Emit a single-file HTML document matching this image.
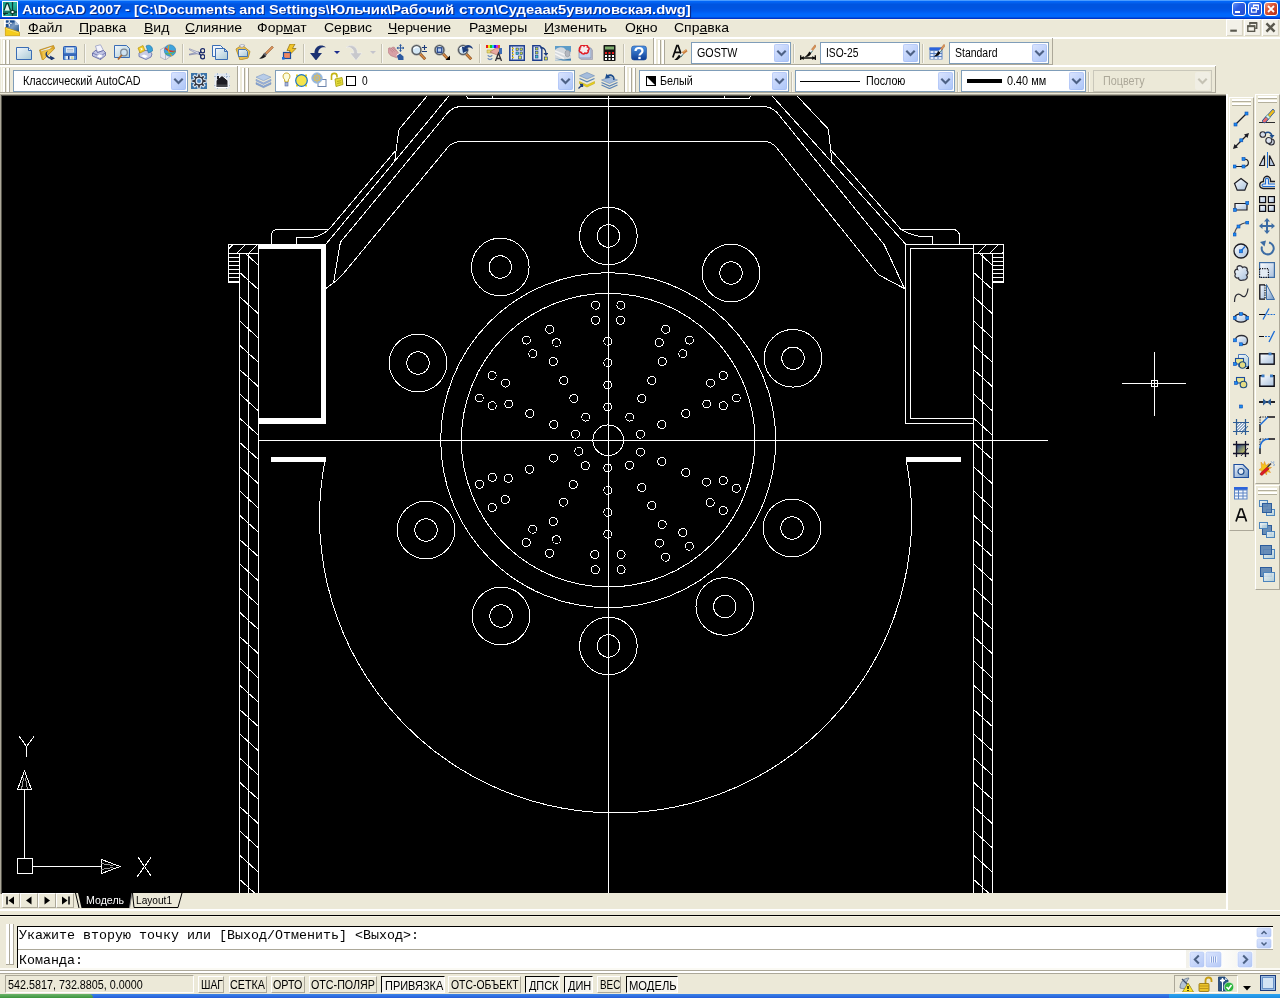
<!DOCTYPE html>
<html><head><meta charset="utf-8"><title>AutoCAD 2007</title>
<style>
*{box-sizing:border-box;margin:0;padding:0}
html,body{width:1280px;height:998px;overflow:hidden;background:#ece9d8;}
body{will-change:transform;font-family:"Liberation Sans",sans-serif;}
.abs{position:absolute}
#title{position:absolute;left:0;top:0;width:1280px;height:19px;background:linear-gradient(#4a9cff 0,#4a9cff 1px,#0268fa 1px,#0360ee 3px,#0055e0 4px,#0055e0 8px,#0058ec 11px,#0066fc 14px,#0066fc 16.5px,#0050e0 17.5px,#0034cc 18px,#0034cc 19px)}
#title .txt{position:absolute;left:22px;top:1.6px;color:#fff;font-weight:bold;font-size:13px;line-height:16px;white-space:pre;transform-origin:0 0;text-shadow:1px 1px 0 #0a2a8a}
#menubar{position:absolute;left:0;top:19px;width:1280px;height:19px;background:#ece9d8}
.mi{position:absolute;top:-0.4px;font-size:13px;line-height:17px;transform:scaleX(1.077);color:#000;white-space:nowrap;transform-origin:0 0}
.mi u{text-decoration:underline;text-underline-offset:1px}
#draw{position:absolute;left:2px;top:96px;width:1224px;height:797px;background:#000;overflow:hidden}
#draw svg{position:absolute;left:-2px;top:-96px}
svg.d line,svg.d circle,svg.d path{stroke:#fff;fill:none;stroke-width:1}
.combo{position:absolute;height:21px;background:#fff;border:1px solid #7f9db9;font-size:12.5px;line-height:20px;color:#000;white-space:nowrap;overflow:hidden}
.combo .btn{position:absolute;right:1px;top:1px;width:15px;height:18px;border-radius:2px;background:linear-gradient(135deg,#dbe5fe 0,#c3d4fb 50%,#abc5f7 100%);box-shadow:inset 0 0 0 1px rgba(160,185,245,.45)}
.combo .btn svg{position:absolute;left:0;top:0}
.combo span.t{position:absolute;top:0;transform-origin:0 0}
.grip{position:absolute;width:5px;border-left:1px solid #fff;border-right:1px solid #aca899;background:linear-gradient(90deg,#ece9d8 0,#ece9d8 1px,#aca899 1px,#aca899 2px,#fff 2px,#fff 3px)}
.vsep{position:absolute;width:2px;border-left:1px solid #c5c2b2;border-right:1px solid #f8f7f2}
.hl{position:absolute;height:1px}
.sb{position:absolute;top:976px;height:17px;font-size:12px;line-height:17px;color:#000;white-space:nowrap;border:1px solid;border-color:#fff #aca899 #aca899 #fff;overflow:hidden}
.sb.on{border-color:#000 #fff #fff #000;background:#f6f5ef}
.sb.on span{margin:1px 0 0 0}
.sb span{position:absolute;top:0;transform-origin:0 0}

.cmd{font-family:"Liberation Mono",monospace;font-size:13.33px;line-height:16px;color:#000;white-space:nowrap}
.combo.dis{background:#ece9d8;border-color:#c9c7ba;color:#aca899}
.combo.dis .btn{background:#f0eee4;border-color:#dedbd0}
.combo.dis .btn{box-shadow:none}
.combo.dis .btn path{stroke:#c5c2b5}

</style></head>
<body>
<svg class="abs" width="0" height="0" style="left:0;top:0"><defs><linearGradient id="glb" x1="0" y1="0" x2="1" y2="1"><stop offset="0" stop-color="#fdfeff"/><stop offset="1" stop-color="#a8c0dc"/></linearGradient><linearGradient id="gmid" x1="0" y1="0" x2="1" y2="1"><stop offset="0" stop-color="#f4f8fc"/><stop offset="1" stop-color="#6c94c4"/></linearGradient><linearGradient id="gpage" x1="0" y1="0" x2="1" y2="1"><stop offset="0" stop-color="#f4f8fb"/><stop offset="1" stop-color="#a9c9d6"/></linearGradient></defs></svg>
<div id="title">
<span class="txt" style="left:22.3px;transform:scaleX(1.0976)">AutoCAD 2007 - </span>
<span class="txt" style="left:134.1px;transform:scaleX(1.0965)">[C:\Documents and </span>
<span class="txt" style="left:268.8px;transform:scaleX(1.1084)">Settings\</span>
<span class="txt" style="left:329.6px;transform:scaleX(1.1418)">Юльчик\</span>
<span class="txt" style="left:391.1px;transform:scaleX(1.1515)">Рабочий </span>
<span class="txt" style="left:458.5px;transform:scaleX(1.1908)">стол\</span>
<span class="txt" style="left:497.7px;transform:scaleX(1.1377)">Судеаак5увиловская.dwg]</span>
<svg class="abs" style="left:2px;top:1px" width="16" height="16" viewBox="0 0 16 16"><defs><linearGradient id="gapp" x1="0" y1="0" x2="1" y2="1"><stop offset="0" stop-color="#1c9c88"/><stop offset=".5" stop-color="#28b8a0"/><stop offset="1" stop-color="#107060"/></linearGradient></defs><rect x="0" y="0" width="16" height="16" fill="#fff"/><rect x="1" y="1" width="14" height="14" fill="url(#gapp)"/><path d="M2 9.500l2.500-7h1.500l2.500 7" fill="#e4f4f0" stroke="#0c3c30" stroke-width="1.300"/><path d="M1 11h7M1 12.500h5" stroke="#0c3c30" stroke-width="1"/><path d="M10.500 1v14M8 11h7" stroke="#0c3c30" stroke-width="1.300"/><rect x="9" y="9.500" width="3" height="3" fill="#fff" stroke="#0c3c30" stroke-width="1"/><path d="M2 14l2-2" stroke="#0c2c24" stroke-width="1.200"/></svg>
<svg class="abs" style="left:1232px;top:2px" width="14" height="14" viewBox="0 0 14 14"><defs><linearGradient id="gtb" x1="0" y1="0" x2="1" y2="1"><stop offset="0" stop-color="#6c9cfc"/><stop offset=".4" stop-color="#2c5ce4"/><stop offset="1" stop-color="#2448c8"/></linearGradient><linearGradient id="gtc" x1="0" y1="0" x2="1" y2="1"><stop offset="0" stop-color="#f0a08c"/><stop offset=".4" stop-color="#dc5434"/><stop offset="1" stop-color="#b42c14"/></linearGradient></defs><rect x=".5" y=".5" width="13" height="13" rx="2.500" fill="url(#gtb)" stroke="#fff" stroke-width="1"/><rect x="3" y="9" width="5" height="2" fill="#fff"/></svg>
<svg class="abs" style="left:1248px;top:2px" width="14" height="14" viewBox="0 0 14 14"><defs><linearGradient id="gtb" x1="0" y1="0" x2="1" y2="1"><stop offset="0" stop-color="#6c9cfc"/><stop offset=".4" stop-color="#2c5ce4"/><stop offset="1" stop-color="#2448c8"/></linearGradient><linearGradient id="gtc" x1="0" y1="0" x2="1" y2="1"><stop offset="0" stop-color="#f0a08c"/><stop offset=".4" stop-color="#dc5434"/><stop offset="1" stop-color="#b42c14"/></linearGradient></defs><rect x=".5" y=".5" width="13" height="13" rx="2.500" fill="url(#gtb)" stroke="#fff" stroke-width="1"/><path d="M5.500 5v-1.700h4.800v4h-1.500" fill="none" stroke="#fff" stroke-width="1.200"/><path d="M5 3.300h5.800" stroke="#fff" stroke-width="1.600"/><rect x="3.500" y="6.300" width="4.800" height="3.800" fill="none" stroke="#fff" stroke-width="1.200"/><path d="M3 6.200h5.800" stroke="#fff" stroke-width="1.600"/></svg>
<svg class="abs" style="left:1264px;top:2px" width="14" height="14" viewBox="0 0 14 14"><defs><linearGradient id="gtb" x1="0" y1="0" x2="1" y2="1"><stop offset="0" stop-color="#6c9cfc"/><stop offset=".4" stop-color="#2c5ce4"/><stop offset="1" stop-color="#2448c8"/></linearGradient><linearGradient id="gtc" x1="0" y1="0" x2="1" y2="1"><stop offset="0" stop-color="#f0a08c"/><stop offset=".4" stop-color="#dc5434"/><stop offset="1" stop-color="#b42c14"/></linearGradient></defs><rect x=".5" y=".5" width="13" height="13" rx="2.500" fill="url(#gtc)" stroke="#fff" stroke-width="1"/><path d="M4 4l6 6M10 4l-6 6" stroke="#fff" stroke-width="1.900"/></svg>
</div>
<div id="menubar">
<div class="abs" style="left:0;top:0;width:1280px;height:1px;background:#fbf2db"></div>
<svg class="abs" style="left:4px;top:1px" width="16" height="16" viewBox="0 0 16 16"><defs><linearGradient id="gdoc" x1="0" y1="0" x2="1" y2="1"><stop offset="0" stop-color="#1c4c8c"/><stop offset=".5" stop-color="#7c9cc4"/><stop offset="1" stop-color="#1c4c84"/></linearGradient></defs><rect x="0" y="0" width="16" height="16" fill="#fff"/><path d="M2 .500h9l4 4.500v8h-13z" fill="url(#gdoc)"/><path d="M11 .500l4 4.500h-4z" fill="#b4c8e0"/><rect x="1.800" y=".500" width="2.600" height="2" fill="#1c4c8c"/><rect x="5.800" y=".500" width="4.500" height="2" fill="#1c4c8c"/><rect x="1.800" y="4" width="2.600" height="3" fill="#1c4c8c"/><path d="M5.300 .500v6M1.800 3.300h6" stroke="#fff" stroke-width="1"/><circle cx="5.300" cy="3.300" r="1" fill="#1c4c8c" stroke="#fff" stroke-width=".7"/><path d="M1.200 7.400l14.600 4.800v3.600h-14.600z" fill="#f4cc1c" stroke="#c4940c" stroke-width=".8"/><path d="M2 8.500l12.500 4.200" stroke="#fce46c" stroke-width="1"/></svg>
<span class="mi" style="left:28px"><u>Ф</u>айл</span>
<span class="mi" style="left:79px"><u>П</u>равка</span>
<span class="mi" style="left:144px"><u>В</u>ид</span>
<span class="mi" style="left:185px"><u>С</u>лияние</span>
<span class="mi" style="left:257px">Фор<u>м</u>ат</span>
<span class="mi" style="left:324px">Се<u>р</u>вис</span>
<span class="mi" style="left:388px"><u>Ч</u>ерчение</span>
<span class="mi" style="left:469px">Ра<u>з</u>меры</span>
<span class="mi" style="left:544px"><u>И</u>зменить</span>
<span class="mi" style="left:625px">О<u>к</u>но</span>
<span class="mi" style="left:674px">Спр<u>а</u>вка</span>
<svg class="abs" style="left:1226px;top:0px" width="17" height="17" viewBox="0 0 16 16"><rect x="0" y="0" width="16" height="16" fill="#fff"/><rect x="1" y="1" width="14.500" height="14.500" fill="#f3f1e8"/><path d="M15.500 1v14.500h-14.500" fill="none" stroke="#d6d2c2" stroke-width="1"/><rect x="4" y="10" width="6.200" height="2" fill="#5a584e"/></svg>
<svg class="abs" style="left:1244px;top:0px" width="17" height="17" viewBox="0 0 16 16"><rect x="0" y="0" width="16" height="16" fill="#fff"/><rect x="1" y="1" width="14.500" height="14.500" fill="#f3f1e8"/><path d="M15.500 1v14.500h-14.500" fill="none" stroke="#d6d2c2" stroke-width="1"/><path d="M5.500 5.500v-1.800h6.500v5h-1.500" fill="none" stroke="#5a584e" stroke-width="1.300"/><path d="M5.200 3.700h7" stroke="#5a584e" stroke-width="1.800"/><rect x="3.600" y="6.600" width="6.400" height="5" fill="none" stroke="#5a584e" stroke-width="1.300"/><path d="M3 6.800h7.600" stroke="#5a584e" stroke-width="1.800"/></svg>
<svg class="abs" style="left:1262px;top:0px" width="17" height="17" viewBox="0 0 16 16"><rect x="0" y="0" width="16" height="16" fill="#fff"/><rect x="1" y="1" width="14.500" height="14.500" fill="#f3f1e8"/><path d="M15.500 1v14.500h-14.500" fill="none" stroke="#d6d2c2" stroke-width="1"/><path d="M4.200 4.200l7.600 7.600M11.800 4.200l-7.600 7.600" stroke="#5a584e" stroke-width="2.300"/></svg>
</div>
<div class="abs" style="left:0;top:37px;width:1280px;height:2px;background:#fff"></div>
<div class="abs" style="left:0;top:64px;width:1053px;height:1px;background:#aca899"></div>
<div class="abs" style="left:0;top:65px;width:1216px;height:2px;background:#fff"></div>
<div class="abs" style="left:0;top:92px;width:1216px;height:1px;background:#aca899"></div>
<div class="abs" style="left:653px;top:38px;width:1px;height:27px;background:#aca899"></div>
<div class="abs" style="left:1052px;top:38px;width:1px;height:27px;background:#aca899"></div>
<div class="abs" style="left:654px;top:38px;width:2px;height:26px;background:#fff"></div>
<div class="abs" style="left:237px;top:66px;width:1px;height:27px;background:#aca899"></div>
<div class="abs" style="left:624px;top:66px;width:1px;height:27px;background:#aca899"></div>
<div class="abs" style="left:1215px;top:66px;width:1px;height:27px;background:#aca899"></div>
<div class="abs" style="left:238px;top:66px;width:2px;height:26px;background:#fff"></div>
<div class="abs" style="left:625px;top:66px;width:2px;height:26px;background:#fff"></div>
<div class="abs" style="left:1px;top:39px;width:1px;height:25px;background:#f8f7f0"></div>
<div class="abs" style="left:1px;top:67px;width:1px;height:25px;background:#f8f7f0"></div>
<div class="abs" style="left:0;top:94px;width:1228px;height:1px;background:#aca899"></div>
<div class="abs" style="left:0;top:95px;width:1227px;height:1px;background:#55534a"></div>
<div class="abs" style="left:0;top:94px;width:1px;height:800px;background:#aca899"></div>
<div class="abs" style="left:1px;top:95px;width:1px;height:799px;background:#55534a"></div>
<div class="abs" style="left:3px;top:40px;width:3px;height:24px;background:#fff;border-right:1px solid #aca899;"></div>
<div class="abs" style="left:7px;top:40px;width:3px;height:24px;background:#fff;border-right:1px solid #aca899;"></div>
<svg class="abs" style="left:16px;top:44px" width="16" height="16" viewBox="0 0 16 16"><path d="M.5 3.5h12l3 3v9H.5z" fill="url(#gpage)" stroke="#3a6db5"/><path d="M12.5 3.5v3h3" fill="#fff" stroke="#3a6db5"/></svg>
<svg class="abs" style="left:39px;top:44px" width="16" height="16" viewBox="0 0 16 16"><path d="M.5 6L14.500 1.500 15.700 4.500 3.500 16.500z" fill="#e0a828" stroke="#b08018" stroke-width=".7"/><path d="M2 6.500L13 2.800 4.500 11.500z" fill="#e8f0f8"/><path d="M2.800 7.200L15.500 4.300 3.600 16.300z" fill="#f0c448" stroke="#c89828" stroke-width=".5"/><path d="M10.200 6.500C6.500 8 7.500 12 11.300 13.200L10.800 11.400 16 14.200 11.500 16.800 11.700 15C5.500 13.500 4.500 8 10.200 6.500z" fill="#1c3870"/></svg>
<svg class="abs" style="left:62px;top:44px" width="16" height="16" viewBox="0 0 16 16"><rect x="1.500" y="2.500" width="13" height="13.500" rx="1" fill="#5c98dc" stroke="#2c58b0" stroke-width="1"/><rect x="4" y="3.500" width="8" height="5.300" fill="#f4f8fc" stroke="#88a8d0" stroke-width=".4"/><path d="M5 5.300h6M5 7h6" stroke="#88a0c0" stroke-width=".8"/><rect x="2" y="9.300" width="12" height="2.700" fill="#3868b8"/><rect x="3.500" y="12" width="8.500" height="3.500" fill="#e4ecf4"/><rect x="6" y="12" width="1.500" height="3.500" fill="#1c3c8c"/><rect x="9" y="12.500" width="2.500" height="2.500" fill="#d4d8a4"/></svg>
<svg class="abs" style="left:91px;top:44px" width="16" height="16" viewBox="0 0 16 16"><path d="M4.500 2L9.500 .800 12.500 6.500 6.500 8.500z" fill="#f4f4fc" stroke="#8c94c0" stroke-width=".7"/><path d="M1.500 9L5 6l1.500 2.500 6-2 2 2v3L9.500 15.500 1.500 12z" fill="#c0c4e4" stroke="#5860a0" stroke-width=".8"/><path d="M1.500 9l8 3.500 5-4M9.500 12.500v3" fill="none" stroke="#5860a0" stroke-width=".7"/><path d="M5 12.300l4 2 3.500-2.500-4-1.800z" fill="#fff" stroke="#8c94c0" stroke-width=".4"/></svg>
<svg class="abs" style="left:114px;top:44px" width="16" height="16" viewBox="0 0 16 16"><path d="M.5 1.5h12l3 3v9H.5z" fill="url(#gpage)" stroke="#3a6db5"/><circle cx="10" cy="8.5" r="3.3" fill="#cfe3f2" fill-opacity=".9" stroke="#7d8894" stroke-width="1.3"/><path d="M7.8 11L4 15.5" stroke="#b06a30" stroke-width="1.8"/></svg>
<svg class="abs" style="left:137px;top:44px" width="16" height="16" viewBox="0 0 16 16"><path d="M2 9l3-3 8 1 2 3-1 3-5 2.5-7-3z" fill="#c8cce6" stroke="#5c6aa8" stroke-width=".8"/><path d="M4 12l4 2 3-2-4-1.5z" fill="#fff"/><path d="M9 2c3-2 7 0 6.500 5l-4 2z" fill="#3aa3d8" stroke="#1e6fa8" stroke-width=".6"/><path d="M1 4l5-2.500 2 5-5 2.500z" fill="#f2cf2a" stroke="#b8940c" stroke-width=".7"/><path d="M3.500 4.500l2 1m-1.500 1l1-2.500" stroke="#fff" stroke-width=".8"/></svg>
<svg class="abs" style="left:160px;top:44px" width="16" height="16" viewBox="0 0 16 16"><path d="M0 6l5-3 6 2v7l-5.500 4-5.500-3z" fill="#e8e8ee" stroke="#a0a4b4" stroke-width=".7"/><path d="M5.500 9v7" stroke="#a0a4b4" stroke-width=".7"/><circle cx="10" cy="6.500" r="5.700" fill="#3fa4dc" stroke="#2a78b0" stroke-width=".6"/><path d="M5 4c3 3 7 4 10.500 3" fill="none" stroke="#d83a2a" stroke-width="1.300"/><path d="M9 1c-2 4 0 9 3 11" fill="none" stroke="#e0a020" stroke-width="1.100"/><path d="M5.500 9.500c3 1 7 0 9.500-2" fill="none" stroke="#58b848" stroke-width="1"/></svg>
<svg class="abs" style="left:189px;top:44px" width="16" height="16" viewBox="0 0 16 16"><path d="M0 10.300L9.800 7.800 11 9.300 0 11z" fill="#c4c8dc" stroke="#5c6494" stroke-width=".5"/><path d="M.500 4.800L10.800 8.800 9.800 10.400 .500 5.800z" fill="#eceef6" stroke="#5c6494" stroke-width=".5"/><path d="M10 9.300l2.200-1.600M10 9.300l2.200 2.400" stroke="#1c2c6c" stroke-width="1.300"/><circle cx="13.700" cy="6.800" r="2.100" fill="none" stroke="#1c2c6c" stroke-width="1.300"/><circle cx="13.700" cy="12.700" r="2.100" fill="none" stroke="#1c2c6c" stroke-width="1.300"/></svg>
<svg class="abs" style="left:212px;top:44px" width="16" height="16" viewBox="0 0 16 16"><path d="M.5 1.500h8l3 3v8H.500z" fill="#f2f6fa" stroke="#3a6db5"/><path d="M3.500 4.500h9l3 3v8H3.500z" fill="url(#gpage)" stroke="#3a6db5"/><path d="M12.500 4.500v3h3" fill="none" stroke="#3a6db5"/></svg>
<svg class="abs" style="left:235px;top:44px" width="16" height="16" viewBox="0 0 16 16"><path d="M1 5l6-4 8 6.500-2 6.500-8 2z" fill="#e8c050" stroke="#b8902a" stroke-width=".9"/><path d="M4 2l3-2 3 1.500-3 2z" fill="#e8e8f0" stroke="#8890a8" stroke-width=".6"/><path d="M3.500 5.500h7l2 2v5h-9z" fill="url(#gpage)" stroke="#3a6db5" stroke-width=".9"/></svg>
<svg class="abs" style="left:258px;top:44px" width="16" height="16" viewBox="0 0 16 16"><path d="M7 9l7-7 1.500 1.500-7 7z" fill="#d89058" stroke="#8a5428" stroke-width=".5"/><path d="M5 10l2-1.500 2 2-1.500 2z" fill="#6a6a70"/><path d="M1 14.500c2-.5 3-2.500 4.500-4.500l2.500 2.500c-2 1.500-4 2.500-7 2z" fill="#1c1c20"/></svg>
<svg class="abs" style="left:281px;top:44px" width="16" height="16" viewBox="0 0 16 16"><path d="M9 0h5l-2.500 4.500h3.500l-8 8 2-6h-3z" fill="#f0c428" stroke="#8a6a08" stroke-width=".7"/><rect x="2.500" y="8.500" width="7" height="6" fill="#f08860" stroke="#1c4c9c" stroke-width="1.200"/><rect x="1" y="13" width="2.600" height="2.600" fill="#1c6cdc"/></svg>
<svg class="abs" style="left:310px;top:44px" width="16" height="16" viewBox="0 0 16 16"><path d="M16 3.500c-4.500-4-11.500-1.500-11.500 5.500h-4.500l6 7.500 6-7.500h-3.800c0-4.500 4.300-6.500 7.800-5.500z" fill="#1c3272"/></svg>
<svg class="abs" style="left:334px;top:51px" width="6" height="3" viewBox="0 0 6 3"><path d="M0 0h6l-3 3z" fill="#1c2c8c"/></svg>
<svg class="abs" style="left:346px;top:44px" width="16" height="16" viewBox="0 0 16 16"><path d="M0 3.500c4.500-4 11.500-1.500 11.500 5.500h4.500l-6 7.500-6-7.500h3.800c0-4.500-4.300-6.500-7.800-5.500z" fill="#c8c8cc" stroke="#f4f4f4" stroke-width=".5"/></svg>
<svg class="abs" style="left:370px;top:51px" width="6" height="3" viewBox="0 0 6 3"><path d="M0 0h6l-3 3z" fill="#c4c4cc"/></svg>
<svg class="abs" style="left:388px;top:44px" width="16" height="16" viewBox="0 0 16 16"><path d="M0 5.500C0 4 1.800 3.300 3 4.300L4.300 3.400C5.800 2.600 7.200 3.600 7.200 4.800L10.500 9 12 11.500 8.500 13.700 3 11.700C1 10.500-.3 7.500 0 5.500z" fill="#d8a0a6" stroke="#b47880" stroke-width=".6"/><path d="M1.300 4.800L5 8.300M3 4L6.500 7.500M4.800 3.600L8 6.800" stroke="#b87c84" stroke-width=".7"/><path d="M9 11.700L12 9.500 15.500 12.500V16.500H10.500z" fill="#2c5aa0"/><path d="M8.600 11.300L11.700 9.200" stroke="#fff" stroke-width="1"/><path d="M12.500 .800v6.400M9.300 4h6.400" stroke="#2c5aa0" stroke-width="1"/><path d="M12.500 0l-1.500 1.800h3zM12.500 8l-1.500-1.800h3zM8.500 4l1.800-1.500v3zM16.500 4l-1.800-1.500v3z" fill="#2c5aa0"/></svg>
<svg class="abs" style="left:411px;top:44px" width="16" height="16" viewBox="0 0 16 16"><path d="M8.800 9.500l5.400 5.700" stroke="#7c4418" stroke-width="2.800"/><path d="M9 9.700l5 5.300" stroke="#d88c44" stroke-width="1.600"/><circle cx="5.500" cy="6" r="4.500" fill="#d4e8f6" stroke="#54585c" stroke-width="1.600"/><circle cx="5.500" cy="6" r="5.400" fill="none" stroke="#a4a8ac" stroke-width=".5"/><path d="M2.800 5c.8-1.800 2.800-2.500 4.500-1.500" stroke="#fff" stroke-width="1.100" fill="none"/><path d="M11 3.500h5M13.500 1v5M11 7.500h5" stroke="#1c3c7c" stroke-width="1.100"/></svg>
<svg class="abs" style="left:434px;top:44px" width="16" height="16" viewBox="0 0 16 16"><path d="M8.800 9.500l5.400 5.700" stroke="#7c4418" stroke-width="2.800"/><path d="M9 9.700l5 5.300" stroke="#d88c44" stroke-width="1.600"/><circle cx="5.500" cy="6" r="4.500" fill="#d4e8f6" stroke="#54585c" stroke-width="1.600"/><circle cx="5.500" cy="6" r="5.400" fill="none" stroke="#a4a8ac" stroke-width=".5"/><path d="M2.800 5c.8-1.800 2.800-2.500 4.500-1.500" stroke="#fff" stroke-width="1.100" fill="none"/><rect x="3.300" y="3.800" width="4.500" height="4.500" fill="#b8d0ec" stroke="#24448c" stroke-width="1.300"/><path d="M16 11.500v4.500h-4.500z" fill="#000"/></svg>
<svg class="abs" style="left:457px;top:44px" width="16" height="16" viewBox="0 0 16 16"><path d="M8.800 9.500l5.400 5.700" stroke="#7c4418" stroke-width="2.800"/><path d="M9 9.700l5 5.300" stroke="#d88c44" stroke-width="1.600"/><circle cx="6" cy="6" r="4.500" fill="#d4e8f6" stroke="#54585c" stroke-width="1.600"/><circle cx="6" cy="6" r="5.400" fill="none" stroke="#a4a8ac" stroke-width=".5"/><path d="M2.800 5c.8-1.800 2.800-2.500 4.500-1.500" stroke="#fff" stroke-width="1.100" fill="none"/><path d="M16 5C15 .5 9 -.5 7.300 3.300L4.800 2.500 6 9 11.800 6 9.500 4.800C10.800 2.800 13.800 3 16 5z" fill="#1c3c7c"/></svg>
<svg class="abs" style="left:486px;top:45px" width="16" height="16" viewBox="0 0 16 16"><rect x="0" y="0" width="2" height="3" fill="#e81c1c"/><rect x="2" y="0" width="2" height="3" fill="#e8e81c"/><rect x="4" y="0" width="2" height="3" fill="#1cc81c"/><rect x="6" y="0" width="2" height="3" fill="#1cc8e8"/><rect x="8" y="0" width="2" height="3" fill="#1c1ce8"/><rect x="10" y="0" width="2" height="3" fill="#c81ce8"/><rect x="12" y="0" width="2" height="3" fill="#e8641c"/><path d="M1 5h8v3H1z" fill="#e8d870" stroke="#a89838" stroke-width=".5"/><path d="M4 7l6-4 5 1v5l-4 1z" fill="#e8a8a0" stroke="#a86860" stroke-width=".6"/><path d="M13 3h3v6h-3z" fill="#3c6cb4"/><path d="M2 10c0 2 4 2 4 0M2 13c0 2 4 2 4 0" fill="none" stroke="#6c8cbc" stroke-width="1.300"/><path d="M9.500 16l3-8 3 8M10.500 13.500h4" fill="none" stroke="#2c2c34" stroke-width="1.300"/></svg>
<svg class="abs" style="left:509px;top:45px" width="16" height="16" viewBox="0 0 16 16"><rect x=".8" y=".8" width="14.500" height="14.500" fill="#dce6f4" stroke="#1c3c8c" stroke-width="1.500"/><path d="M3.500 1.500v13" stroke="#1c3c8c" stroke-width=".8"/><path d="M3 3.500h2M3 6.500h2M3 9.500h2M3 12.500h2" stroke="#e8c81c" stroke-width="1.600"/><rect x="7" y="3" width="2.500" height="2.500" fill="#c8d83c" stroke="#1c3c8c" stroke-width=".6"/><rect x="11" y="3" width="2.500" height="2.500" fill="#c8d83c" stroke="#1c3c8c" stroke-width=".6"/><rect x="7" y="7" width="2.500" height="2.500" fill="#3cc8c8" stroke="#1c3c8c" stroke-width=".6"/><rect x="11" y="7" width="2.500" height="2.500" fill="#c8d83c" stroke="#1c3c8c" stroke-width=".6"/><rect x="9.500" y="11" width="3" height="3" fill="#e8e83c" stroke="#1c3c8c" stroke-width=".6"/></svg>
<svg class="abs" style="left:532px;top:45px" width="16" height="16" viewBox="0 0 16 16"><path d="M.8 .8h7l2 2v12.500H.8z" fill="#dce6f4" stroke="#1c3c8c" stroke-width="1.400"/><rect x="3.500" y="2.500" width="2.500" height="2.500" fill="#c8d83c" stroke="#1c3c8c" stroke-width=".6"/><rect x="3.500" y="6.500" width="2.500" height="2.500" fill="#c8d83c" stroke="#1c3c8c" stroke-width=".6"/><rect x="3.500" y="10.500" width="2.500" height="2.500" fill="#3cc8c8" stroke="#1c3c8c" stroke-width=".6"/><path d="M8 3c3-1 6 1 6 5.500" fill="none" stroke="#1c3c7c" stroke-width="1.300"/><path d="M11.500 8h5l-2.500 3z" fill="#1c3c7c"/><rect x="12.300" y="12" width="3" height="3" fill="#e8e83c" stroke="#1c3c8c" stroke-width=".7"/></svg>
<svg class="abs" style="left:555px;top:45px" width="16" height="16" viewBox="0 0 16 16"><rect x="0" y="1" width="16" height="14.500" fill="#5c9cc8"/><path d="M0 5c3-3 8-4 11 0l5 2v8.500H0z" fill="#d4d8dc"/><path d="M0 6l10 4 6-1M0 9l9 4.500" stroke="#f4f4f4" stroke-width="1.500" fill="none"/><ellipse cx="12.500" cy="8.500" rx="2.500" ry="3.300" fill="#b4b8c0" stroke="#8c9098" stroke-width=".6"/><path d="M0 13.500l8 2h8v-2l-7 1z" fill="#3c7cac"/></svg>
<svg class="abs" style="left:578px;top:45px" width="16" height="16" viewBox="0 0 16 16"><path d="M3 5h12v10H3z" fill="#b8b8c0"/><path d="M2 4h12v10H2z" fill="#dcdce4" stroke="#8c8c9c" stroke-width=".5"/><path d="M1 3h12v10H1z" fill="#c4d4ec" stroke="#6c7ca4" stroke-width=".6"/><path d="M2.500 2c0-2 3-2 3.500-1 1-1.500 4-1 3.500 1 2 0 2 3 .5 3.500 1 2-1.500 3.500-3 2.500-1 1.500-3.500 1-3.500-.5-2 0-3-2.500-1.500-3.500-1-1 0-2 .5-2z" fill="#f4ecec" stroke="#e01c24" stroke-width="1.500"/></svg>
<svg class="abs" style="left:602px;top:45px" width="16" height="16" viewBox="0 0 16 16"><rect x="1.500" y="0" width="12" height="16" rx=".8" fill="#141414"/><rect x="3" y="1.500" width="9" height="3" fill="#7cac6c"/><g fill="#fff"><rect x="3" y="7" width="2" height="2" fill="#e81c1c"/><rect x="6.500" y="7" width="2" height="2" fill="#e81c1c"/><rect x="10" y="7" width="2" height="2" fill="#e81c1c"/><rect x="3" y="10" width="2" height="2"/><rect x="6.500" y="10" width="2" height="2"/><rect x="10" y="10" width="2" height="2"/><rect x="3" y="13" width="2" height="2"/><rect x="6.500" y="13" width="2" height="2"/><rect x="10" y="13" width="2" height="2"/></g></svg>
<svg class="abs" style="left:631px;top:45px" width="16" height="16" viewBox="0 0 16 16"><defs><linearGradient id="ghelp" x1="0" y1="0" x2="0" y2="1"><stop offset="0" stop-color="#4c94e4"/><stop offset="1" stop-color="#0c3c94"/></linearGradient></defs><rect x=".5" y="1" width="15" height="14" rx="2.500" fill="url(#ghelp)" stroke="#1c4c9c" stroke-width=".6"/><path d="M4.500 6c0-4 7-4 7 0 0 2.500-3 2.500-3 4.500" fill="none" stroke="#fff" stroke-width="2.200"/><rect x="7.300" y="11.800" width="2.400" height="2.300" fill="#fff"/></svg>
<div class="vsep" style="left:84px;top:44px;height:19px"></div>
<div class="vsep" style="left:182px;top:44px;height:19px"></div>
<div class="vsep" style="left:303px;top:44px;height:19px"></div>
<div class="vsep" style="left:381px;top:44px;height:19px"></div>
<div class="vsep" style="left:479px;top:44px;height:19px"></div>
<div class="vsep" style="left:623px;top:44px;height:19px"></div>
<div class="abs" style="left:658px;top:40px;width:3px;height:24px;background:#fff;border-right:1px solid #aca899;"></div>
<div class="abs" style="left:662px;top:40px;width:3px;height:24px;background:#fff;border-right:1px solid #aca899;"></div>
<svg class="abs" style="left:672px;top:44px" width="16" height="16" viewBox="0 0 16 16"><path d="M.800 13.500L4.900 1.500h1.200l2.900 8.300M2.500 8.400h5.800" fill="none" stroke="#0c0c0c" stroke-width="1.700"/><path d="M14.800 6.200l-4.300 3.200" stroke="#c87c3c" stroke-width="2.600"/><path d="M14.400 5.700l-3.800 2.800" stroke="#eab070" stroke-width="1"/><path d="M10.600 9.200l-2.800 3.400" stroke="#e8ecf0" stroke-width="2.200"/><path d="M11 10.300l-2.300 3" stroke="#2c6464" stroke-width="1"/><path d="M8.800 12.300l-1.800-1.500c-1.500 2-3 4-5.500 5.800 3 .3 5.700-1 7.300-4.300z" fill="#0c0c0c"/></svg>
<div class="combo" style="left:691px;top:42px;width:100px;height:22px"><span class="t" style="left:5px;transform:scaleX(0.855)">GOSTW</span><div class="btn"><svg width="15" height="18" viewBox="0 0 15 18"><path d="M3.300 6.700L7.500 10.900 11.700 6.700" fill="none" stroke="#4d6185" stroke-width="2.100"/></svg></div></div>
<div class="vsep" style="left:793px;top:44px;height:19px"></div>
<svg class="abs" style="left:800px;top:44px" width="16" height="16" viewBox="0 0 16 16"><path d="M15 .800L16.200 2.200 12.600 6.800 11.200 5.600z" fill="#dc9458" stroke="#9c5c28" stroke-width=".4"/><path d="M11.200 5.600L12.600 6.800 11 8.900 9.600 7.700z" fill="#eceff2"/><path d="M12.600 6.800L11 8.900" stroke="#2c6c6c" stroke-width=".9"/><path d="M9.300 7.400L11.300 9.100C10.500 11.800 8 13.300 4.600 13.100 6.500 11.600 8 9.800 9.300 7.400z" fill="#0c0c0c"/><path d="M.5 14h15" stroke="#0c0c0c" stroke-width="1.500"/><path d="M.700 11.200v5.600M15.300 11.200v5.600" stroke="#0c0c0c" stroke-width="1.300"/><path d="M.700 14l3-2v4zM15.300 14l-3-2v4z" fill="#0c0c0c"/></svg>
<div class="combo" style="left:820px;top:42px;width:100px;height:22px"><span class="t" style="left:5px;transform:scaleX(0.818)">ISO-25</span><div class="btn"><svg width="15" height="18" viewBox="0 0 15 18"><path d="M3.300 6.700L7.500 10.900 11.700 6.700" fill="none" stroke="#4d6185" stroke-width="2.100"/></svg></div></div>
<div class="vsep" style="left:922px;top:44px;height:19px"></div>
<svg class="abs" style="left:929px;top:44px" width="16" height="16" viewBox="0 0 16 16"><rect x=".5" y="3.500" width="13" height="12" fill="#5c84c4"/><rect x=".5" y="3.500" width="13" height="2.500" fill="#2c64dc"/><g fill="#e4ecf8"><rect x="1.500" y="7" width="3" height="2"/><rect x="5.500" y="7" width="3" height="2"/><rect x="9.500" y="7" width="3" height="2"/><rect x="1.500" y="10" width="3" height="2"/><rect x="5.500" y="10" width="3" height="2"/><rect x="9.500" y="10" width="3" height="2"/><rect x="1.500" y="13" width="3" height="2"/><rect x="5.500" y="13" width="3" height="2"/><rect x="9.500" y="13" width="3" height="2"/></g><g transform="translate(0,-.5)"><path d="M15 .800L16.200 2.200 12.600 6.800 11.200 5.600z" fill="#dc9458" stroke="#9c5c28" stroke-width=".4"/><path d="M11.200 5.600L12.600 6.800 11 8.900 9.600 7.700z" fill="#eceff2"/><path d="M12.600 6.800L11 8.900" stroke="#2c6c6c" stroke-width=".9"/><path d="M9.300 7.400L11.300 9.100C10.500 11.800 8 13.300 4.600 13.100 6.500 11.600 8 9.800 9.300 7.400z" fill="#0c0c0c"/></g></svg>
<div class="combo" style="left:949px;top:42px;width:100px;height:22px"><span class="t" style="left:5px;transform:scaleX(0.838)">Standard</span><div class="btn"><svg width="15" height="18" viewBox="0 0 15 18"><path d="M3.300 6.700L7.500 10.900 11.700 6.700" fill="none" stroke="#4d6185" stroke-width="2.100"/></svg></div></div>
<div class="abs" style="left:3px;top:68px;width:3px;height:24px;background:#fff;border-right:1px solid #aca899;"></div>
<div class="abs" style="left:7px;top:68px;width:3px;height:24px;background:#fff;border-right:1px solid #aca899;"></div>
<div class="combo" style="left:13px;top:70px;width:175px;height:22px"><span class="t" style="left:9px;transform:scaleX(0.866)">Классический AutoCAD</span><div class="btn"><svg width="15" height="18" viewBox="0 0 15 18"><path d="M3.300 6.700L7.500 10.900 11.700 6.700" fill="none" stroke="#4d6185" stroke-width="2.100"/></svg></div></div>
<svg class="abs" style="left:191px;top:73px" width="16" height="16" viewBox="0 0 16 16"><rect x="0" y="0" width="16" height="16" fill="#3c74a8"/><path d="M6.80 0.80L9.20 0.80L9.42 3.00L10.53 3.46L12.24 2.06L13.94 3.76L12.54 5.47L13.00 6.58L15.20 6.80L15.20 9.20L13.00 9.42L12.54 10.53L13.94 12.24L12.24 13.94L10.53 12.54L9.42 13.00L9.20 15.20L6.80 15.20L6.58 13.00L5.47 12.54L3.76 13.94L2.06 12.24L3.46 10.53L3.00 9.42L0.80 9.20L0.80 6.80L3.00 6.58L3.46 5.47L2.06 3.76L3.76 2.06L5.47 3.46L6.58 3.00z" fill="#34343c" stroke="#dce8f4" stroke-width="1.100"/><circle cx="8" cy="8" r="3.300" fill="#dce8f4"/><circle cx="8" cy="8" r="2" fill="#4c84bc"/></svg>
<svg class="abs" style="left:214px;top:73px" width="16" height="16" viewBox="0 0 16 16"><rect x=".5" y=".5" width="15" height="15" fill="#dfe7f1"/><path d="M3.500 0v16M12.500 0v16M0 3.500h16M0 12.500h16" stroke="#9cb0cc" stroke-width=".8" stroke-dasharray="2 1"/><path d="M2 7.500L8 2.500 14 7.500V14.500H2z" fill="#1c1c24" stroke="#fff" stroke-width="1"/><rect x="3" y="3" width="2" height="3.500" fill="#1c1c24"/><path d="M3 11.500h10v2.500h-10z" fill="#44464c"/></svg>
<div class="abs" style="left:242px;top:68px;width:3px;height:24px;background:#fff;border-right:1px solid #aca899;"></div>
<div class="abs" style="left:246px;top:68px;width:3px;height:24px;background:#fff;border-right:1px solid #aca899;"></div>
<svg class="abs" style="left:255px;top:72px" width="17" height="17" viewBox="0 0 17 17"><path d="M8.500 2L16 5.200 8.500 8.700 1 5.200z" fill="#b8cce8" stroke="#7c98c4" stroke-width=".6"/><path d="M1 7.300l7.500 3.500 7.500-3.500v1.700l-7.500 3.500-7.500-3.500z" fill="#9cb4dc" stroke="#6c88b8" stroke-width=".4"/><path d="M1 10.500l7.500 3.500 7.500-3.500v1.700l-7.500 3.500-7.500-3.500z" fill="#8ca8d4" stroke="#5c7cb0" stroke-width=".4"/></svg>
<div class="combo" style="left:275px;top:70px;width:300px;height:22px"><span class="t" style="left:86px;transform:scaleX(0.816)">0</span><svg class="abs" style="left:6px;top:1px" width="90" height="17" viewBox="0 0 90 17"><path d="M4.500 1c-3.500 0-4.500 4-2 6.500l.5 2.500h3l.5-2.500c2.500-2.500 1.500-6.500-2-6.500z" fill="#fcfcdc" stroke="#c4a41c" stroke-width="1"/><rect x="3" y="10.500" width="3" height="3.500" fill="#a4b4dc" stroke="#5c6c9c" stroke-width=".6"/><path d="M14 2.500h2v2h-2zM23 2.500h2v2h-2zM14 12.500h2v2h-2zM23 12.500h2v2h-2z" fill="#ecd41c"/><circle cx="19.500" cy="8.500" r="5.800" fill="#f4e44c" stroke="#1c74c4" stroke-width="1.200"/><rect x="36" y="7.500" width="8" height="7" fill="#fff" stroke="#6c84ac" stroke-width="1"/><circle cx="35" cy="6" r="5.300" fill="#8cb4e4" stroke="#9cbce4" stroke-width=".8"/><circle cx="35" cy="6" r="2.800" fill="none" stroke="#d4bc6c" stroke-width="1.200"/><path d="M35 1v10M30 6h10M31.500 2.500l7 7M38.500 2.500l-7 7" stroke="#d4bc6c" stroke-width=".7"/><path d="M49.500 8v-4c0-3.500 5.500-3.500 5.500 0v1.500" fill="none" stroke="#c4b414" stroke-width="1.600"/><path d="M53 7l7-1.500 1 7-7 2z" fill="#e4dc3c" stroke="#a49c0c" stroke-width=".8"/><path d="M55 9.500l4-.8M55.200 11.500l4-.8" stroke="#a49c0c" stroke-width=".7"/><rect x="64.500" y="4.500" width="9" height="9" fill="#fff" stroke="#000" stroke-width="1"/></svg><div class="btn"><svg width="15" height="18" viewBox="0 0 15 18"><path d="M3.300 6.700L7.500 10.900 11.700 6.700" fill="none" stroke="#4d6185" stroke-width="2.100"/></svg></div></div>
<svg class="abs" style="left:578px;top:72px" width="17" height="17" viewBox="0 0 17 17"><path d="M9 .5l7.500 3.300-7.500 3.200-7.500-3.200z" fill="#a4bcdc" stroke="#6c8cb4" stroke-width=".6"/><path d="M1.500 6.500l7.500 3.300 7.500-3.300" fill="none" stroke="#5c84b4" stroke-width="1.300"/><path d="M1.500 9.500l7.500 3.500 7.500-3.500v2l-7.500 3.500-7.500-3.500z" fill="#ecd41c" stroke="#b49c0c" stroke-width=".5"/><path d="M.5 16.500l4-4M2 12.500h2.500v2.500" fill="none" stroke="#1c3c7c" stroke-width="1.300"/></svg>
<svg class="abs" style="left:601px;top:72px" width="17" height="17" viewBox="0 0 17 17"><path d="M8.500 5l8 3-8 3.500-8-3.500z" fill="#a4bcdc" stroke="#6c8cb4" stroke-width=".6"/><path d="M.5 10.500l8 3.500 8-3.500M.5 13l8 3.500 8-3.500" fill="none" stroke="#5c84b4" stroke-width="1.300"/><path d="M13.500 8c1-4-3-7-7-5l-1-1.500-1.500 5 5-.5-1-1.500c2.500-1 5 1 4 3.500z" fill="#1c4c8c"/></svg>
<div class="abs" style="left:629px;top:68px;width:3px;height:24px;background:#fff;border-right:1px solid #aca899;"></div>
<div class="abs" style="left:633px;top:68px;width:3px;height:24px;background:#fff;border-right:1px solid #aca899;"></div>
<div class="combo" style="left:639px;top:70px;width:150px;height:22px"><span class="t" style="left:20px;transform:scaleX(0.859)">Белый</span><svg class="abs" style="left:6px;top:5px" width="10" height="10" viewBox="0 0 10 10"><rect x=".5" y=".5" width="9" height="9" fill="#fff" stroke="#000"/><path d="M0 0h10v10z" fill="#000"/></svg><div class="btn"><svg width="15" height="18" viewBox="0 0 15 18"><path d="M3.300 6.700L7.500 10.900 11.700 6.700" fill="none" stroke="#4d6185" stroke-width="2.100"/></svg></div></div>
<div class="vsep" style="left:791px;top:72px;height:20px"></div>
<div class="combo" style="left:795px;top:70px;width:160px;height:22px"><span class="t" style="left:70px;transform:scaleX(0.857)">Послою</span><div class="abs" style="left:4px;top:10px;width:60px;height:1px;background:#000"></div><div class="btn"><svg width="15" height="18" viewBox="0 0 15 18"><path d="M3.300 6.700L7.500 10.900 11.700 6.700" fill="none" stroke="#4d6185" stroke-width="2.100"/></svg></div></div>
<div class="vsep" style="left:957px;top:72px;height:20px"></div>
<div class="combo" style="left:961px;top:70px;width:125px;height:22px"><span class="t" style="left:45px;transform:scaleX(0.869)">0.40 мм</span><div class="abs" style="left:5px;top:8px;width:35px;height:4px;background:#000"></div><div class="btn"><svg width="15" height="18" viewBox="0 0 15 18"><path d="M3.300 6.700L7.500 10.900 11.700 6.700" fill="none" stroke="#4d6185" stroke-width="2.100"/></svg></div></div>
<div class="vsep" style="left:1088px;top:72px;height:20px"></div>
<div class="combo dis" style="left:1093px;top:70px;width:119px;height:22px"><span class="t" style="left:9px;transform:scaleX(0.864)">Поцвету</span><div class="btn"><svg width="15" height="18" viewBox="0 0 15 18"><path d="M3.300 6.700L7.500 10.900 11.700 6.700" fill="none" stroke="#4d6185" stroke-width="2.100"/></svg></div></div>
<div id="draw"><svg class="d" width="1280" height="998" viewBox="0 0 1280 998" shape-rendering="crispEdges">
<line x1="608.5" y1="96" x2="608.5" y2="893"/>
<line x1="258" y1="440.5" x2="1048" y2="440.5"/>
<circle cx="608.2" cy="440.2" r="167.5"/>
<circle cx="608.2" cy="440.2" r="146.8"/>
<circle cx="608.2" cy="440.2" r="15.3"/>
<circle cx="608.4" cy="236" r="28.8"/>
<circle cx="608.4" cy="236" r="11.2"/>
<circle cx="500.3" cy="267" r="28.8"/>
<circle cx="500.3" cy="267" r="11.2"/>
<circle cx="418" cy="363" r="28.8"/>
<circle cx="418" cy="363" r="11.2"/>
<circle cx="426" cy="530" r="28.8"/>
<circle cx="426" cy="530" r="11.2"/>
<circle cx="501" cy="616" r="28.8"/>
<circle cx="501" cy="616" r="11.2"/>
<circle cx="608.4" cy="646" r="28.8"/>
<circle cx="608.4" cy="646" r="11.2"/>
<circle cx="724.8" cy="606.5" r="28.8"/>
<circle cx="724.8" cy="606.5" r="11.2"/>
<circle cx="792" cy="528" r="28.8"/>
<circle cx="792" cy="528" r="11.2"/>
<circle cx="793" cy="358.3" r="28.8"/>
<circle cx="793" cy="358.3" r="11.2"/>
<circle cx="731" cy="273" r="28.8"/>
<circle cx="731" cy="273" r="11.2"/>
<circle cx="607.8" cy="341.2" r="4"/>
<circle cx="607.8" cy="362.7" r="4"/>
<circle cx="607.8" cy="385" r="4"/>
<circle cx="607.8" cy="407" r="4"/>
<circle cx="607.8" cy="468" r="4"/>
<circle cx="607.8" cy="490.3" r="4"/>
<circle cx="607.8" cy="512.3" r="4"/>
<circle cx="607.8" cy="534.1" r="4"/>
<circle cx="595.6" cy="305.2" r="4"/>
<circle cx="595.6" cy="320.3" r="4"/>
<circle cx="620.9" cy="305.2" r="4"/>
<circle cx="620.4" cy="320.3" r="4"/>
<circle cx="594.6" cy="554.5" r="4"/>
<circle cx="595.3" cy="569.7" r="4"/>
<circle cx="621.1" cy="554.5" r="4"/>
<circle cx="621.1" cy="569.7" r="4"/>
<circle cx="585.8" cy="417.1" r="4"/>
<circle cx="573.8" cy="398.4" r="4"/>
<circle cx="563.8" cy="380.5" r="4"/>
<circle cx="553.3" cy="361.6" r="4"/>
<circle cx="556.5" cy="342.5" r="4"/>
<circle cx="549.7" cy="329.3" r="4"/>
<circle cx="532.8" cy="353.7" r="4"/>
<circle cx="526.3" cy="340.1" r="4"/>
<circle cx="575.5" cy="434.2" r="4"/>
<circle cx="553.7" cy="424.4" r="4"/>
<circle cx="529.7" cy="413.4" r="4"/>
<circle cx="508.8" cy="404" r="4"/>
<circle cx="492.2" cy="405.7" r="4"/>
<circle cx="479.3" cy="398" r="4"/>
<circle cx="505.5" cy="383.1" r="4"/>
<circle cx="492.2" cy="375.5" r="4"/>
<circle cx="629.8" cy="417.1" r="4"/>
<circle cx="641.7" cy="398.4" r="4"/>
<circle cx="651.8" cy="380.5" r="4"/>
<circle cx="662.3" cy="361.6" r="4"/>
<circle cx="659.3" cy="342.5" r="4"/>
<circle cx="665.7" cy="329.3" r="4"/>
<circle cx="682.8" cy="353.7" r="4"/>
<circle cx="689.3" cy="340.1" r="4"/>
<circle cx="640.4" cy="434.2" r="4"/>
<circle cx="661.7" cy="424.4" r="4"/>
<circle cx="685.7" cy="413.4" r="4"/>
<circle cx="706.8" cy="404" r="4"/>
<circle cx="723.3" cy="405.7" r="4"/>
<circle cx="736.3" cy="398" r="4"/>
<circle cx="710.4" cy="383.1" r="4"/>
<circle cx="723.3" cy="375.5" r="4"/>
<circle cx="578.8" cy="451.3" r="4"/>
<circle cx="553.4" cy="458.1" r="4"/>
<circle cx="529.4" cy="469.3" r="4"/>
<circle cx="508.4" cy="478.4" r="4"/>
<circle cx="492.4" cy="477.4" r="4"/>
<circle cx="479.4" cy="484.3" r="4"/>
<circle cx="505.4" cy="499.5" r="4"/>
<circle cx="492.3" cy="507.5" r="4"/>
<circle cx="585.4" cy="465.6" r="4"/>
<circle cx="573.3" cy="484.5" r="4"/>
<circle cx="563.4" cy="502.2" r="4"/>
<circle cx="553.4" cy="521.5" r="4"/>
<circle cx="556.5" cy="539.5" r="4"/>
<circle cx="549.4" cy="553.3" r="4"/>
<circle cx="532.7" cy="529.2" r="4"/>
<circle cx="526.3" cy="542.4" r="4"/>
<circle cx="640.4" cy="452.1" r="4"/>
<circle cx="661.7" cy="461.5" r="4"/>
<circle cx="685.7" cy="472.4" r="4"/>
<circle cx="706.6" cy="482.1" r="4"/>
<circle cx="723.3" cy="480.6" r="4"/>
<circle cx="736.3" cy="488.3" r="4"/>
<circle cx="710.2" cy="502.6" r="4"/>
<circle cx="723.3" cy="510.5" r="4"/>
<circle cx="629.6" cy="465.3" r="4"/>
<circle cx="641.7" cy="487.6" r="4"/>
<circle cx="651.8" cy="505.5" r="4"/>
<circle cx="662.2" cy="524.4" r="4"/>
<circle cx="659.4" cy="543.1" r="4"/>
<circle cx="665.6" cy="557.2" r="4"/>
<circle cx="682.8" cy="532.5" r="4"/>
<circle cx="689.3" cy="546.2" r="4"/>
<path d="M 324.8 461.7 A 296 296 0 1 0 906.4 461.7"/>
<rect x="271" y="457" width="55" height="5" fill="#fff" stroke="none"/>
<rect x="906" y="457" width="55" height="5" fill="#fff" stroke="none"/>
<rect x="258" y="244" width="68" height="5" fill="#fff" stroke="none"/>
<rect x="321" y="244" width="5" height="180" fill="#fff" stroke="none"/>
<rect x="258" y="418" width="68" height="6" fill="#fff" stroke="none"/>
<line x1="258.5" y1="244" x2="258.5" y2="424"/>
<path d="M 973.5 244.5 H 905.5 V 423.5 H 973.5"/>
<path d="M 973.5 248.5 H 910.5 V 418.5 H 973.5"/>
<line x1="239.5" y1="253" x2="239.5" y2="893"/>
<line x1="248.5" y1="253" x2="248.5" y2="893"/>
<line x1="258.5" y1="253" x2="258.5" y2="893"/>
<line x1="982.5" y1="253" x2="982.5" y2="893"/>
<line x1="992.5" y1="253" x2="992.5" y2="893"/>
<line x1="973.5" y1="244" x2="973.5" y2="893"/>
<line x1="244.95" y1="253" x2="258.5" y2="265.34"/>
<line x1="978.95" y1="253" x2="992.5" y2="265.34"/>
<line x1="239.5" y1="272.32" x2="258.5" y2="289.62"/>
<line x1="973.5" y1="272.32" x2="992.5" y2="289.62"/>
<line x1="239.5" y1="296.6" x2="258.5" y2="313.9"/>
<line x1="973.5" y1="296.6" x2="992.5" y2="313.9"/>
<line x1="239.5" y1="320.88" x2="258.5" y2="338.18"/>
<line x1="973.5" y1="320.88" x2="992.5" y2="338.18"/>
<line x1="239.5" y1="345.16" x2="258.5" y2="362.46"/>
<line x1="973.5" y1="345.16" x2="992.5" y2="362.46"/>
<line x1="239.5" y1="369.44" x2="258.5" y2="386.74"/>
<line x1="973.5" y1="369.44" x2="992.5" y2="386.74"/>
<line x1="239.5" y1="393.72" x2="258.5" y2="411.02"/>
<line x1="973.5" y1="393.72" x2="992.5" y2="411.02"/>
<line x1="239.5" y1="418" x2="258.5" y2="435.3"/>
<line x1="973.5" y1="418" x2="992.5" y2="435.3"/>
<line x1="239.5" y1="442.28" x2="258.5" y2="459.58"/>
<line x1="973.5" y1="442.28" x2="992.5" y2="459.58"/>
<line x1="239.5" y1="466.56" x2="258.5" y2="483.86"/>
<line x1="973.5" y1="466.56" x2="992.5" y2="483.86"/>
<line x1="239.5" y1="490.84" x2="258.5" y2="508.14"/>
<line x1="973.5" y1="490.84" x2="992.5" y2="508.14"/>
<line x1="239.5" y1="515.12" x2="258.5" y2="532.42"/>
<line x1="973.5" y1="515.12" x2="992.5" y2="532.42"/>
<line x1="239.5" y1="539.4" x2="258.5" y2="556.7"/>
<line x1="973.5" y1="539.4" x2="992.5" y2="556.7"/>
<line x1="239.5" y1="563.68" x2="258.5" y2="580.98"/>
<line x1="973.5" y1="563.68" x2="992.5" y2="580.98"/>
<line x1="239.5" y1="587.96" x2="258.5" y2="605.26"/>
<line x1="973.5" y1="587.96" x2="992.5" y2="605.26"/>
<line x1="239.5" y1="612.24" x2="258.5" y2="629.54"/>
<line x1="973.5" y1="612.24" x2="992.5" y2="629.54"/>
<line x1="239.5" y1="636.52" x2="258.5" y2="653.82"/>
<line x1="973.5" y1="636.52" x2="992.5" y2="653.82"/>
<line x1="239.5" y1="660.8" x2="258.5" y2="678.1"/>
<line x1="973.5" y1="660.8" x2="992.5" y2="678.1"/>
<line x1="239.5" y1="685.08" x2="258.5" y2="702.38"/>
<line x1="973.5" y1="685.08" x2="992.5" y2="702.38"/>
<line x1="239.5" y1="709.36" x2="258.5" y2="726.66"/>
<line x1="973.5" y1="709.36" x2="992.5" y2="726.66"/>
<line x1="239.5" y1="733.64" x2="258.5" y2="750.94"/>
<line x1="973.5" y1="733.64" x2="992.5" y2="750.94"/>
<line x1="239.5" y1="757.92" x2="258.5" y2="775.22"/>
<line x1="973.5" y1="757.92" x2="992.5" y2="775.22"/>
<line x1="239.5" y1="782.2" x2="258.5" y2="799.5"/>
<line x1="973.5" y1="782.2" x2="992.5" y2="799.5"/>
<line x1="239.5" y1="806.48" x2="258.5" y2="823.78"/>
<line x1="973.5" y1="806.48" x2="992.5" y2="823.78"/>
<line x1="239.5" y1="830.76" x2="258.5" y2="848.06"/>
<line x1="973.5" y1="830.76" x2="992.5" y2="848.06"/>
<line x1="239.5" y1="855.04" x2="258.5" y2="872.34"/>
<line x1="973.5" y1="855.04" x2="992.5" y2="872.34"/>
<line x1="239.5" y1="879.32" x2="254.52" y2="893"/>
<line x1="973.5" y1="879.32" x2="988.52" y2="893"/>
<path d="M 258.5 244.5 H 228.5 V 282.5 H 239.5"/>
<line x1="228.5" y1="253.5" x2="258.5" y2="253.5"/>
<path d="M 973.5 244.5 H 1003.5 V 282.5 H 992.5"/>
<line x1="973.5" y1="253.5" x2="1003.5" y2="253.5"/>
<line x1="228.5" y1="257.5" x2="239.5" y2="257.5"/>
<line x1="992.5" y1="257.5" x2="1003.5" y2="257.5"/>
<line x1="228.5" y1="261.5" x2="239.5" y2="261.5"/>
<line x1="992.5" y1="261.5" x2="1003.5" y2="261.5"/>
<line x1="228.5" y1="265.5" x2="239.5" y2="265.5"/>
<line x1="992.5" y1="265.5" x2="1003.5" y2="265.5"/>
<line x1="228.5" y1="269.5" x2="239.5" y2="269.5"/>
<line x1="992.5" y1="269.5" x2="1003.5" y2="269.5"/>
<line x1="228.5" y1="273.5" x2="239.5" y2="273.5"/>
<line x1="992.5" y1="273.5" x2="1003.5" y2="273.5"/>
<line x1="228.5" y1="277.5" x2="239.5" y2="277.5"/>
<line x1="992.5" y1="277.5" x2="1003.5" y2="277.5"/>
<line x1="228.5" y1="281.5" x2="239.5" y2="281.5"/>
<line x1="992.5" y1="281.5" x2="1003.5" y2="281.5"/>
<line x1="228.5" y1="249.2" x2="233.2" y2="244.5"/>
<line x1="236.8" y1="253" x2="245.3" y2="244.5"/>
<line x1="248.9" y1="253" x2="257.4" y2="244.5"/>
<line x1="978" y1="253" x2="986.5" y2="244.5"/>
<line x1="990.2" y1="253" x2="998.7" y2="244.5"/>
<line x1="1002.2" y1="253" x2="1003.5" y2="251.7"/>
<path d="M 271.5 244.5 V 236 Q 271.5 229.5 278 229.5 H 328.8"/>
<path d="M 296.5 244.5 V 237.5 H 311 Q 320 237 328.8 229.5"/>
<path d="M 959.5 244.5 V 236.5 Q 959.5 229.5 952.5 229.5 H 901"/>
<path d="M 932.5 244.5 V 236.5 H 920 Q 908 234 901 229.5"/>
<path d="M 427 96 L 399.7 128.6 Q 398.6 130 398 135.7 L 394.8 161"/>
<path d="M 395.6 150.6 L 328.8 229.5"/>
<path d="M 448.9 96 L 326 244"/>
<path d="M 608.5 106.5 H 462 Q 453.1 106.5 447.4 113.2 L 340.4 242.2 L 333.6 282.7"/>
<path d="M 608.5 141.5 H 461 Q 452.7 141.5 447.4 147.8 L 343 274.1 Q 339 279 333.6 282.7 L 326 288.5"/>
<path d="M 797.1 96 L 827.4 128.1 Q 828.6 129.5 829 135 L 831.9 161.3"/>
<path d="M 830.6 149.6 L 901 229.5"/>
<path d="M 772.2 96 L 905.5 244"/>
<path d="M 608.5 106.5 H 762.9 Q 771 106.5 777 112.5 L 884.2 244.7 L 904.5 288.6"/>
<path d="M 608.5 141.5 H 764 Q 771.5 141.5 776.6 147.8 L 878.5 274.8 L 904.5 288.6"/>
<path d="M 466.4 96 L 467.5 98.5 H 749 L 750.9 96"/>
<line x1="492.5" y1="96" x2="492.5" y2="98.5"/>
<line x1="724.5" y1="96" x2="724.5" y2="98.5"/>
<path d="M 17.5 858.5 H 32.5 V 873.5 H 17.5 Z"/>
<line x1="24.5" y1="790" x2="24.5" y2="858"/>
<path d="M 24.5 771 L 17.5 789.5 H 31.5 Z"/>
<path d="M 23.5 778 L 21.5 789.5 M 25.5 778 L 27.5 789.5" style="stroke:#9a9a9a"/>
<path d="M 19.3 736.5 L 26.5 746.5 L 33.9 736.5 M 26.5 746.5 V 757"/>
<line x1="33" y1="866.5" x2="102" y2="866.5"/>
<path d="M 120 866.5 L 101.5 859.5 V 873.5 Z"/>
<path d="M 113 865.5 L 101.5 863.5 M 113 867.5 L 101.5 869.5" style="stroke:#9a9a9a"/>
<path d="M 138.3 857.5 L 151.4 876.5 M 151 857.5 L 137.4 876.5"/>
<line x1="1122" y1="383.5" x2="1186" y2="383.5"/>
<line x1="1154.5" y1="352" x2="1154.5" y2="416"/>
<path d="M 1151.5 380.5 H 1157.5 V 386.5 H 1151.5 Z"/>
</svg></div>
<div class="abs" style="left:1229px;top:97px;width:25px;height:434px;border:1px solid;border-color:#fff #aca899 #aca899 #fff;"></div>
<div class="abs" style="left:1232px;top:99px;height:3px;width:19px;background:#fff;border-bottom:1px solid #b4b09c;"></div>
<div class="abs" style="left:1232px;top:103px;height:3px;width:19px;background:#fff;border-bottom:1px solid #b4b09c;"></div>
<svg class="abs" style="left:1233px;top:111px" width="16" height="16" viewBox="0 0 16 16"><path d="M2.500 13.500L13.500 2.500" stroke="#1c1c24" stroke-width="1.300"/><rect x="1.0" y="12.0" width="3" height="3" fill="#1c8cf0" stroke="#0c4cb4" stroke-width=".6"/><rect x="12.0" y="1.0" width="3" height="3" fill="#1c8cf0" stroke="#0c4cb4" stroke-width=".6"/></svg>
<svg class="abs" style="left:1233px;top:133px" width="16" height="16" viewBox="0 0 16 16"><path d="M1.500 14.500L14.500 1.500" stroke="#1c1c24" stroke-width="1.300"/><path d="M0 16l1.500-5 3.500 3.500zM16 0l-1.500 5-3.500-3.500z" fill="#1c1c24"/><rect x="6.800000000000001" y="5.8" width="3" height="3" fill="#1c8cf0" stroke="#0c4cb4" stroke-width=".6"/></svg>
<svg class="abs" style="left:1233px;top:155px" width="16" height="16" viewBox="0 0 16 16"><path d="M1.500 11.500h9M10.500 4c6.500 0 6.500 7.500 0 7.500" fill="none" stroke="#1c1c24" stroke-width="1.200"/><rect x="0.0" y="10.0" width="3" height="3" fill="#1c8cf0" stroke="#0c4cb4" stroke-width=".6"/><rect x="9.0" y="10.0" width="3" height="3" fill="#1c8cf0" stroke="#0c4cb4" stroke-width=".6"/><rect x="9.0" y="2.5" width="3" height="3" fill="#1c8cf0" stroke="#0c4cb4" stroke-width=".6"/></svg>
<svg class="abs" style="left:1233px;top:177px" width="16" height="16" viewBox="0 0 16 16"><path d="M8 1.500l6.500 5-2.700 6.700h-7.600l-2.700-6.700z" fill="url(#glb)" stroke="#1c1c24" stroke-width="1.200"/></svg>
<svg class="abs" style="left:1233px;top:199px" width="16" height="16" viewBox="0 0 16 16"><path d="M2 4.500h12v6.500h-12z" fill="url(#glb)" stroke="#1c1c24" stroke-width="1.200"/><rect x="0.5" y="9.5" width="3" height="3" fill="#1c8cf0" stroke="#0c4cb4" stroke-width=".6"/><rect x="12.8" y="2.5" width="3" height="3" fill="#1c8cf0" stroke="#0c4cb4" stroke-width=".6"/></svg>
<svg class="abs" style="left:1233px;top:221px" width="16" height="16" viewBox="0 0 16 16"><path d="M1.500 14c0-6 5-12 13-12.500" fill="none" stroke="#4c4c54" stroke-width="1.200"/><rect x="0.0" y="12.0" width="3" height="3" fill="#1c8cf0" stroke="#0c4cb4" stroke-width=".6"/><rect x="4.0" y="4.0" width="3" height="3" fill="#1c8cf0" stroke="#0c4cb4" stroke-width=".6"/><rect x="12.8" y="0.0" width="3" height="3" fill="#1c8cf0" stroke="#0c4cb4" stroke-width=".6"/></svg>
<svg class="abs" style="left:1233px;top:243px" width="16" height="16" viewBox="0 0 16 16"><circle cx="8" cy="8" r="7" fill="url(#glb)" stroke="#1c1c24" stroke-width="1.300"/><path d="M8 8l4-4.500" stroke="#1c6cd4" stroke-width="1.200"/><rect x="6.5" y="6.800000000000001" width="3" height="3" fill="#1c8cf0" stroke="#0c4cb4" stroke-width=".6"/></svg>
<svg class="abs" style="left:1233px;top:265px" width="16" height="16" viewBox="0 0 16 16"><path d="M4.500 1.500c2-1.500 4.500-.5 5 1 2-1.500 5.500 0 4.500 3 1.500 1.500 1 4-.5 4.500 2 2.500-.5 5.500-3.500 5-2 1-4.500 0-4.500-2-2.500.5-4.500-1.500-3-4-2-2 0-5.500 2-4.500-.5-1.500-.5-2.500 0-3z" fill="url(#glb)" stroke="#34343c" stroke-width="1.300"/></svg>
<svg class="abs" style="left:1233px;top:287px" width="16" height="16" viewBox="0 0 16 16"><path d="M1.500 15c0-9 4.500-9 7-6.500s5.500 1 6.500-7" fill="none" stroke="#2c2c34" stroke-width="1.200"/></svg>
<svg class="abs" style="left:1233px;top:309px" width="16" height="16" viewBox="0 0 16 16"><ellipse cx="8" cy="9" rx="6.500" ry="4.200" fill="url(#glb)" stroke="#1c1c24" stroke-width="1.300"/><rect x="0.19999999999999996" y="7.5" width="3" height="3" fill="#1c8cf0" stroke="#0c4cb4" stroke-width=".6"/><rect x="6.5" y="3.5" width="3" height="3" fill="#1c8cf0" stroke="#0c4cb4" stroke-width=".6"/><rect x="12.8" y="7.5" width="3" height="3" fill="#1c8cf0" stroke="#0c4cb4" stroke-width=".6"/></svg>
<svg class="abs" style="left:1233px;top:331px" width="16" height="16" viewBox="0 0 16 16"><ellipse cx="8.500" cy="9" rx="6" ry="4.300" fill="url(#glb)" stroke="none"/><path d="M2.500 9c0-6 12-6 12 0s-4 4.500-6.500 4.300" fill="none" stroke="#2c2c34" stroke-width="1.300"/><rect x="0.5" y="7.800000000000001" width="3" height="3" fill="#1c8cf0" stroke="#0c4cb4" stroke-width=".6"/><rect x="6.5" y="11.8" width="3" height="3" fill="#1c8cf0" stroke="#0c4cb4" stroke-width=".6"/></svg>
<svg class="abs" style="left:1233px;top:353px" width="16" height="16" viewBox="0 0 16 16"><path d="M5.500 1.500h7l3 3v9h-10z" fill="url(#gpage)" stroke="#3a6db5" stroke-width=".9"/><rect x="2.500" y="5.500" width="8" height="5.500" fill="#ece890" stroke="#1c4c9c" stroke-width="1.100"/><circle cx="9.500" cy="12" r="3.200" fill="#e4dc84" stroke="#1c4c7c" stroke-width="1.100"/><path d="M16 12.500v3.500h-3.500z" fill="#000"/><rect x="0.5" y="9.5" width="3" height="3" fill="#1c8cf0" stroke="#0c4cb4" stroke-width=".6"/></svg>
<svg class="abs" style="left:1233px;top:375px" width="16" height="16" viewBox="0 0 16 16"><rect x="3.500" y="2.500" width="8" height="5.500" fill="#ece890" stroke="#1c4c9c" stroke-width="1.100"/><circle cx="10.500" cy="9.500" r="3.300" fill="#e4dc84" stroke="#1c4c7c" stroke-width="1.100"/><rect x="1.5" y="6.5" width="3" height="3" fill="#1c8cf0" stroke="#0c4cb4" stroke-width=".6"/></svg>
<svg class="abs" style="left:1233px;top:397px" width="16" height="16" viewBox="0 0 16 16"><rect x="6.5" y="8.0" width="3" height="3" fill="#1c8cf0" stroke="#0c4cb4" stroke-width=".6"/></svg>
<svg class="abs" style="left:1233px;top:419px" width="16" height="16" viewBox="0 0 16 16"><rect x="3.500" y="3.500" width="9" height="9" fill="#fff"/><path d="M3.500 6l2.500-2.500M3.500 9l5.500-5.500M3.500 12l8.500-8.500M6 12.500l6.500-6.500M9 12.500l3.500-3.500" stroke="#2c5c94" stroke-width="1"/><path d="M0 3.500h16M0 12.500h16M3.500 0v16M12.500 0v16" stroke="#2c5c94" stroke-width="1.200"/><path d="M8 15l7-8" stroke="#2c5c94" stroke-width=".9"/></svg>
<svg class="abs" style="left:1233px;top:441px" width="16" height="16" viewBox="0 0 16 16"><defs><linearGradient id="ggr" x1="0" y1="0" x2="1" y2="1"><stop offset="0" stop-color="#1c3c8c"/><stop offset="1" stop-color="#dcd45c"/></linearGradient></defs><rect x="3.500" y="3.500" width="9" height="9" fill="url(#ggr)"/><path d="M0 3.500h16M0 12.500h16M3.500 0v16M12.500 0v16" stroke="#14142c" stroke-width="1.300"/><path d="M8 15l7-8" stroke="#14142c" stroke-width=".9"/></svg>
<svg class="abs" style="left:1233px;top:463px" width="16" height="16" viewBox="0 0 16 16"><path d="M1 1.500h9l5.500 5.500v7.500H1z" fill="url(#gmid)" stroke="#1c4c9c" stroke-width="1.200"/><circle cx="8" cy="8.500" r="3" fill="#e4ecf4" stroke="#1c4c8c" stroke-width="1.200"/></svg>
<svg class="abs" style="left:1233px;top:485px" width="16" height="16" viewBox="0 0 16 16"><rect x="1" y="2" width="13.500" height="12.500" fill="#5c84c4"/><rect x="1" y="2" width="13.500" height="2.500" fill="#2c64dc"/><g fill="#f4f8fc"><rect x="2" y="5.500" width="3" height="2"/><rect x="6" y="5.500" width="3.500" height="2"/><rect x="10.500" y="5.500" width="3" height="2"/><rect x="2" y="8.500" width="3" height="2"/><rect x="6" y="8.500" width="3.500" height="2"/><rect x="10.500" y="8.500" width="3" height="2"/><rect x="2" y="11.500" width="3" height="2"/><rect x="6" y="11.500" width="3.500" height="2"/><rect x="10.500" y="11.500" width="3" height="2"/></g></svg>
<svg class="abs" style="left:1233px;top:507px" width="16" height="16" viewBox="0 0 16 16"><path d="M3 14.500L7.300 2h1.800l4.400 12.500M4.800 10.200h6.800" fill="none" stroke="#0c0c0c" stroke-width="1.700"/></svg>
<div class="abs" style="left:1255px;top:94px;width:25px;height:390px;border:1px solid;border-color:#fff #aca899 #aca899 #fff;"></div>
<div class="abs" style="left:1258px;top:96px;height:3px;width:19px;background:#fff;border-bottom:1px solid #b4b09c;"></div>
<div class="abs" style="left:1258px;top:100px;height:3px;width:19px;background:#fff;border-bottom:1px solid #b4b09c;"></div>
<svg class="abs" style="left:1259px;top:108px" width="16" height="16" viewBox="0 0 16 16"><path d="M0 14.500h16" stroke="#2c2c2c" stroke-width="1"/><path d="M3.500 12.500L14 1l2 2.500-9.500 11z" fill="#ecbc1c" stroke="#1c4ca4" stroke-width=".8"/><path d="M3.500 12.500l3.500-4 2.500 2.500-3 3.500c-1.500 1-3.500-.5-3-2z" fill="#e46c6c" stroke="#1c4ca4" stroke-width=".8"/><path d="M7 8.500l1.500-1.700 2.500 2.500-1.500 1.700z" fill="#e4f4f4" stroke="#3c9c9c" stroke-width=".6"/></svg>
<svg class="abs" style="left:1259px;top:130px" width="16" height="16" viewBox="0 0 16 16"><circle cx="3.800" cy="4.500" r="2.800" fill="#d4dce8" stroke="#2c2c34" stroke-width="1.100"/><circle cx="12.300" cy="12" r="3" fill="#c4ccd8" stroke="#2c2c34" stroke-width="1.100"/><circle cx="9.800" cy="10.500" r="3" fill="#dce4f0" stroke="#2c2c34" stroke-width="1.100"/><path d="M6 3.500c3-2.500 6-1 7 2" fill="none" stroke="#1c4c8c" stroke-width="1.500"/><path d="M10.500 5h5l-2.500 3.500z" fill="#1c4c8c"/></svg>
<svg class="abs" style="left:1259px;top:152px" width="16" height="16" viewBox="0 0 16 16"><path d="M8.500 0v16" stroke="#1c6cd4" stroke-width="1"/><path d="M5.500 3.500v10h-5zM10.500 3.500v10h5z" fill="url(#glb)" stroke="#1c1c24" stroke-width="1.200"/></svg>
<svg class="abs" style="left:1259px;top:174px" width="16" height="16" viewBox="0 0 16 16"><path d="M16 7.500h-4.500c1-7-8-7-7 0-5 .5-5 6.500 0 7h11.500" fill="none" stroke="#1c1c24" stroke-width="1.300"/><path d="M16 10h-6.500v-4c0-2.500-3-2.500-3 0v4h-2c-2 0-2 2.500 0 2.500h11.500" fill="#e4ecf8" stroke="#1c6cd4" stroke-width="1.100"/></svg>
<svg class="abs" style="left:1259px;top:196px" width="16" height="16" viewBox="0 0 16 16"><rect x="0.6" y="0.6" width="6" height="6" fill="url(#glb)" stroke="#0c0c14" stroke-width="1.200"/><rect x="0.6" y="9.4" width="6" height="6" fill="url(#glb)" stroke="#0c0c14" stroke-width="1.200"/><rect x="9.4" y="0.6" width="6" height="6" fill="url(#glb)" stroke="#0c0c14" stroke-width="1.200"/><rect x="9.4" y="9.4" width="6" height="6" fill="url(#glb)" stroke="#0c0c14" stroke-width="1.200"/></svg>
<svg class="abs" style="left:1259px;top:218px" width="16" height="16" viewBox="0 0 16 16"><path d="M8 0l3 3.500h-2v3.500h3.500v-2l3.500 3-3.500 3v-2h-3.500v3.500h2l-3 3.500-3-3.500h2v-3.500h-3.500v2l-3.500-3 3.500-3v2h3.500v-3.500h-2z" fill="#3c6ca4"/></svg>
<svg class="abs" style="left:1259px;top:240px" width="16" height="16" viewBox="0 0 16 16"><path d="M10 2.500a6 6 0 1 1-7 4" fill="none" stroke="#3c6ca4" stroke-width="2"/><path d="M1 2l6-1.500-1.500 6z" fill="#3c6ca4"/></svg>
<svg class="abs" style="left:1259px;top:262px" width="16" height="16" viewBox="0 0 16 16"><rect x=".6" y=".6" width="14.800" height="14.800" fill="url(#glb)" stroke="#3c6ca4" stroke-width="1.200"/><rect x=".6" y="6.600" width="8.800" height="8.800" fill="#e4ecf4" stroke="#0c0c14" stroke-width="1.200" stroke-dasharray="1.200 1.200"/></svg>
<svg class="abs" style="left:1259px;top:284px" width="16" height="16" viewBox="0 0 16 16"><path d="M7.500 .5l8 15h-8z" fill="url(#gmid)" stroke="#3c6ca4" stroke-width="1"/><path d="M6 .8h-5.200v14.400h5.200" fill="url(#glb)" stroke="#0c0c14" stroke-width="1.300"/><path d="M6 1v14" stroke="#0c0c14" stroke-width="1.200" stroke-dasharray="1.200 1.200"/></svg>
<svg class="abs" style="left:1259px;top:306px" width="16" height="16" viewBox="0 0 16 16"><path d="M0 8.500h6" stroke="#0c0c14" stroke-width="1"/><path d="M8.500 8.500h7.500" stroke="#1c6cd4" stroke-width="1" stroke-dasharray="2 1"/><path d="M4 13.500l6-11" stroke="#1c6cd4" stroke-width="1.300"/></svg>
<svg class="abs" style="left:1259px;top:328px" width="16" height="16" viewBox="0 0 16 16"><path d="M0 8.500h5" stroke="#0c0c14" stroke-width="1"/><path d="M6 8.500h6" stroke="#1c6cd4" stroke-width="1" stroke-dasharray="2 1"/><path d="M10 14l5.500-11" stroke="#1c6cd4" stroke-width="1.300"/></svg>
<svg class="abs" style="left:1259px;top:350px" width="16" height="16" viewBox="0 0 16 16"><rect x=".8" y="3.800" width="14.400" height="10.400" fill="url(#glb)" stroke="#0c0c14" stroke-width="1.400"/><rect x="9.500" y="2.500" width="3" height="2.800" fill="#3c7cc4"/></svg>
<svg class="abs" style="left:1259px;top:372px" width="16" height="16" viewBox="0 0 16 16"><path d="M4 3.800h-3.200v10.400h14.400v-10.400h-2.200" fill="url(#glb)" stroke="#0c0c14" stroke-width="1.400"/><rect x="2.500" y="2.500" width="3" height="2.800" fill="#3c7cc4"/><rect x="11" y="2.500" width="3" height="2.800" fill="#3c7cc4"/></svg>
<svg class="abs" style="left:1259px;top:394px" width="16" height="16" viewBox="0 0 16 16"><path d="M0 8h16" stroke="#0c0c14" stroke-width="1.800"/><path d="M4 4.500l4 3.500-4 3.500zM12 4.500l-4 3.500 4 3.500z" fill="#2c5c94"/></svg>
<svg class="abs" style="left:1259px;top:416px" width="16" height="16" viewBox="0 0 16 16"><path d="M1 16v-8M8 1h8" stroke="#0c0c14" stroke-width="1.400"/><path d="M1 1v7M1 1h7" stroke="#0c0c14" stroke-width="1.200" stroke-dasharray="1.200 1.200"/><path d="M1 9l8-8" stroke="#1c6cd4" stroke-width="1.500"/></svg>
<svg class="abs" style="left:1259px;top:438px" width="16" height="16" viewBox="0 0 16 16"><path d="M1 16v-6M9 1h7" stroke="#0c0c14" stroke-width="1.400"/><path d="M1 1v7M1 1h7" stroke="#0c0c14" stroke-width="1.200" stroke-dasharray="1.200 1.200"/><path d="M1 10.500c0-6 3-9.500 9-9.500" fill="none" stroke="#1c6cd4" stroke-width="1.700"/></svg>
<svg class="abs" style="left:1259px;top:460px" width="16" height="16" viewBox="0 0 16 16"><path d="M2 2l2.500 3 1-3.500 1.500 4 3-2-1 3.500 3.500.5-3 2 2 3-3.500-1-.5 3.500-2-3-3 2 .5-3.500-3.500-.500 3-2z" fill="#f4c41c" stroke="#e4841c" stroke-width=".5"/><path d="M1.500 13l6.500-6 2 2-6.500 6c-1.500 1-3-.5-2-2z" fill="#dc1c24" stroke="#8c0c14" stroke-width=".5"/><path d="M8.500 7l3.500-3.500" stroke="#3c3c44" stroke-width="1.600"/><path d="M12 1l1 2 2-1.500-.5 2.500 2 1-2.500.5" fill="none" stroke="#9cb4d4" stroke-width=".9"/></svg>
<div class="abs" style="left:1255px;top:485px;width:25px;height:105px;border:1px solid;border-color:#fff #aca899 #aca899 #fff;"></div>
<div class="abs" style="left:1258px;top:488px;height:3px;width:19px;background:#fff;border-bottom:1px solid #b4b09c;"></div>
<div class="abs" style="left:1258px;top:492px;height:3px;width:19px;background:#fff;border-bottom:1px solid #b4b09c;"></div>
<svg class="abs" style="left:1259px;top:500px" width="16" height="16" viewBox="0 0 16 16"><rect x="0.5" y="0.5" width="8" height="6" fill="url(#gpage)" fill-opacity=".9" stroke="#4c84bc" stroke-width="1"/><rect x="7.5" y="9.5" width="8" height="6" fill="url(#gpage)" fill-opacity=".9" stroke="#4c84bc" stroke-width="1"/><rect x="3.5" y="3.5" width="9" height="9" fill="#5c84b4" fill-opacity=".92" stroke="#2c5c9c" stroke-width="1"/></svg>
<svg class="abs" style="left:1259px;top:522px" width="16" height="16" viewBox="0 0 16 16"><rect x="3.5" y="3.5" width="9" height="9" fill="#5c84b4" fill-opacity=".92" stroke="#2c5c9c" stroke-width="1"/><rect x="0.5" y="0.5" width="8" height="6" fill="url(#gpage)" fill-opacity=".9" stroke="#4c84bc" stroke-width="1"/><rect x="7.5" y="9.5" width="8" height="6" fill="url(#gpage)" fill-opacity=".9" stroke="#4c84bc" stroke-width="1"/></svg>
<svg class="abs" style="left:1259px;top:544px" width="16" height="16" viewBox="0 0 16 16"><rect x="4.5" y="5.5" width="11" height="9" fill="url(#gpage)" fill-opacity=".9" stroke="#4c84bc" stroke-width="1"/><rect x="1.5" y="1.5" width="11" height="9" fill="#5c84b4" fill-opacity=".92" stroke="#2c5c9c" stroke-width="1"/></svg>
<svg class="abs" style="left:1259px;top:566px" width="16" height="16" viewBox="0 0 16 16"><rect x="1.5" y="1.5" width="11" height="9" fill="#5c84b4" fill-opacity=".92" stroke="#2c5c9c" stroke-width="1"/><rect x="4.5" y="6.5" width="11" height="9" fill="url(#gpage)" fill-opacity=".9" stroke="#4c84bc" stroke-width="1"/></svg>
<div class="abs" style="left:2px;top:893px;width:72px;height:15px;background:#ece9d8"></div>
<div class="abs" style="left:2px;top:893px;width:18px;height:15px;border:1px solid;border-color:#fff #aca899 #aca899 #fff"></div>
<svg class="abs" style="left:2px;top:893px" width="18" height="15" viewBox="0 0 18 15"><path d="M5 3.500v8" stroke="#000" stroke-width="1.500"/><path d="M12 3.500v8l-5.500-4z" fill="#000"/></svg>
<div class="abs" style="left:20px;top:893px;width:18px;height:15px;border:1px solid;border-color:#fff #aca899 #aca899 #fff"></div>
<svg class="abs" style="left:20px;top:893px" width="18" height="15" viewBox="0 0 18 15"><path d="M11.500 3.500v8l-5.500-4z" fill="#000"/></svg>
<div class="abs" style="left:38px;top:893px;width:18px;height:15px;border:1px solid;border-color:#fff #aca899 #aca899 #fff"></div>
<svg class="abs" style="left:38px;top:893px" width="18" height="15" viewBox="0 0 18 15"><path d="M6.500 3.500v8l5.500-4z" fill="#000"/></svg>
<div class="abs" style="left:56px;top:893px;width:18px;height:15px;border:1px solid;border-color:#fff #aca899 #aca899 #fff"></div>
<svg class="abs" style="left:56px;top:893px" width="18" height="15" viewBox="0 0 18 15"><path d="M13 3.500v8" stroke="#000" stroke-width="1.500"/><path d="M6 3.500v8l5.500-4z" fill="#000"/></svg>
<svg class="abs" style="left:74px;top:893px" width="120" height="16" viewBox="0 0 120 16"><path d="M4 0L7.500 15H55.500L58 0z" fill="#000"/><path d="M1.500 0L5 15" stroke="#000" fill="none"/><path d="M55.500 15L58 0" stroke="#808080" fill="none"/><path d="M58.500 0L60 14.500H104L108 0" fill="#ece9d8" stroke="#000"/></svg>
<span class="abs" style="left:86px;top:893px;font-size:11px;line-height:14px;color:#fff;white-space:nowrap;transform-origin:0 0;transform:scaleX(.965)" id="tabm">Модель</span>
<span class="abs" style="left:136px;top:893px;font-size:11px;line-height:14px;color:#000;white-space:nowrap;transform-origin:0 0;transform:scaleX(.92)" id="tabl">Layout1</span>
<div class="abs" style="left:0;top:909px;width:1228px;height:2px;background:#fff"></div>
<div class="abs" style="left:1226px;top:94px;width:2px;height:817px;background:#fff"></div>
<div class="abs" style="left:1228px;top:910px;width:52px;height:1px;background:#fff"></div>
<div class="abs" style="left:0;top:915px;width:1280px;height:1px;background:#000"></div>
<div class="abs" style="left:0;top:916px;width:1280px;height:1px;background:#f8f5e6"></div>
<div class="abs" style="left:6px;top:924px;width:4px;height:41px;background:#fff;border-right:1px solid #aca899;border-bottom:1px solid #aca899"></div>
<div class="abs" style="left:10px;top:924px;width:4px;height:41px;background:#fff;border-right:1px solid #aca899;border-bottom:1px solid #aca899"></div>
<div class="abs" style="left:17px;top:926px;width:1256px;height:42px;background:#fff;border-left:1px solid #000;border-top:1px solid #000"></div>
<div class="abs" style="left:18px;top:949px;width:1255px;height:1px;background:#aca899"></div>
<div class="abs" style="left:1186px;top:950px;width:70px;height:18px;background:linear-gradient(90deg,#f2f1ea,#fdfdfb 50%,#f2f1ea)"></div>
<div class="abs" style="left:1256px;top:950px;width:17px;height:18px;background:#ece9d8"></div>
<span class="abs cmd" style="left:19px;top:928px" id="cmd1">Укажите вторую точку или [Выход/Отменить] &lt;Выход&gt;:</span>
<span class="abs cmd" style="left:19px;top:953px" id="cmd2">Команда:</span>
<svg class="abs" style="left:1256px;top:927px" width="16" height="11" viewBox="0 0 16 11"><defs><linearGradient id="gsb" x1="0" y1="0" x2="1" y2="1"><stop offset="0" stop-color="#dce6fe"/><stop offset="1" stop-color="#b4c8f6"/></linearGradient></defs><rect x="0" y="0" width="16" height="11" rx="2.500" fill="#fff"/><rect x="1" y="1" width="14" height="9" rx="1.500" fill="url(#gsb)" stroke="#b4c8f4" stroke-width=".6"/><path d="M5.500 7l2.500-2.500 2.500 2.500" fill="none" stroke="#4c6184" stroke-width="1.500"/></svg>
<svg class="abs" style="left:1256px;top:938px" width="16" height="11" viewBox="0 0 16 11"><rect x="0" y="0" width="16" height="11" rx="2.500" fill="#fff"/><rect x="1" y="1" width="14" height="9" rx="1.500" fill="url(#gsb)" stroke="#b4c8f4" stroke-width=".6"/><path d="M5.500 4.500l2.500 2.500 2.500-2.500" fill="none" stroke="#4c6184" stroke-width="1.500"/></svg>
<svg class="abs" style="left:1189px;top:951px" width="16" height="17" viewBox="0 0 16 17"><rect x="0" y="0" width="16" height="17" rx="2.500" fill="#fff"/><rect x="1" y="1" width="14" height="15" rx="1.500" fill="url(#gsb)" stroke="#b4c8f4" stroke-width=".6"/><path d="M9.800 4.500l-4 4 4 4" fill="none" stroke="#4c6184" stroke-width="2"/></svg>
<svg class="abs" style="left:1205px;top:951px" width="17" height="17" viewBox="0 0 17 17"><rect x="0" y="0" width="17" height="17" rx="2.500" fill="#fff"/><rect x="1" y="1" width="15" height="15" rx="1.500" fill="url(#gsb)" stroke="#b4c8f4" stroke-width=".6"/><path d="M5.500 5.500v6M7.500 5.500v6M9.500 5.500v6M11.500 5.500v6" stroke="#eef4fe" stroke-width="1"/><path d="M6.500 5.500v6M8.500 5.500v6M10.500 5.500v6" stroke="#8ca4dc" stroke-width="1"/></svg>
<svg class="abs" style="left:1237px;top:951px" width="16" height="17" viewBox="0 0 16 17"><rect x="0" y="0" width="16" height="17" rx="2.500" fill="#fff"/><rect x="1" y="1" width="14" height="15" rx="1.500" fill="url(#gsb)" stroke="#b4c8f4" stroke-width=".6"/><path d="M6.200 4.500l4 4-4 4" fill="none" stroke="#4c6184" stroke-width="2"/></svg>
<div class="abs" style="left:0;top:968px;width:1280px;height:2px;background:#fbfaf4"></div>
<div class="abs" style="left:0;top:970px;width:1280px;height:1px;background:#aca899"></div>
<div class="abs" style="left:0;top:971px;width:1280px;height:2px;background:#fff"></div>
<div class="abs" style="left:0;top:973px;width:1280px;height:1px;background:#aca899"></div>
<div class="abs" style="left:5px;top:975px;width:189px;height:18px;border:1px solid;border-color:#aca899 #fff #fff #aca899"></div>
<span class="abs" id="coords" style="left:8px;top:978px;font-size:12px;line-height:15px;white-space:nowrap;transform-origin:0 0;transform:scaleX(.8975)">542.5817, 732.8805, 0.0000</span>
<div class="sb" style="left:198px;width:26px"><span style="left:1.6px;transform:scaleX(0.859)">ШАГ</span></div>
<div class="sb" style="left:229px;width:38px"><span style="left:0.2px;transform:scaleX(0.897)">СЕТКА</span></div>
<div class="sb" style="left:271px;width:34px"><span style="left:1.3px;transform:scaleX(0.893)">ОРТО</span></div>
<div class="sb" style="left:309px;width:68px"><span style="left:1.3px;transform:scaleX(0.892)">ОТС-ПОЛЯР</span></div>
<div class="sb on" style="left:381px;width:64px"><span style="left:2.6px;transform:scaleX(0.914)">ПРИВЯЗКА</span></div>
<div class="sb" style="left:448px;width:73px"><span style="left:1.6px;transform:scaleX(0.867)">ОТС-ОБЪЕКТ</span></div>
<div class="sb on" style="left:525px;width:35px"><span style="left:3.4px;transform:scaleX(0.907)">ДПСК</span></div>
<div class="sb on" style="left:564px;width:29px"><span style="left:3.0px;transform:scaleX(0.917)">ДИН</span></div>
<div class="sb" style="left:597px;width:24px"><span style="left:1.5px;transform:scaleX(0.822)">ВЕС</span></div>
<div class="sb on" style="left:626px;width:52px"><span style="left:2.3px;transform:scaleX(0.936)">МОДЕЛЬ</span></div>
<div class="abs" style="left:1174px;top:975px;width:64px;height:18px;border:1px solid;border-color:#aca899 #fff #fff #aca899"></div>
<svg class="abs" style="left:1178px;top:976px" width="16" height="16" viewBox="0 0 16 16"><path d="M2 12c0-6 4-10 9-10l-3 5 4 4c-3 2-7 2-10 1z" fill="#b4c4d4" stroke="#5c6c84" stroke-width=".7"/><path d="M4 3l8 8" stroke="#3c4c6c" stroke-width="1.200"/><path d="M10 7l5.500 9h-11z" fill="#fce42c" stroke="#8c7c0c" stroke-width=".7"/><path d="M10 10v3M10 14v1" stroke="#000" stroke-width="1.300"/></svg>
<svg class="abs" style="left:1198px;top:976px" width="16" height="16" viewBox="0 0 16 16"><path d="M7.500 8v-3.500c0-4 6-4 6 0v1.500" fill="none" stroke="#c49c14" stroke-width="1.800"/><rect x="1" y="7.500" width="10" height="8" rx="1" fill="#ecc42c" stroke="#8c6c0c" stroke-width=".8"/><path d="M1.500 10h9M1.500 12.500h9" stroke="#b48c14" stroke-width=".8"/></svg>
<svg class="abs" style="left:1218px;top:976px" width="16" height="16" viewBox="0 0 16 16"><path d="M.5 1h6.500l3 3v11H.500z" fill="#2c5484" stroke="#1c3c6c" stroke-width=".8"/><path d="M7 1v3h3z" fill="#c4d4e4"/><circle cx="4.500" cy="4.500" r="1.600" fill="none" stroke="#fff" stroke-width="1"/><path d="M4.500 2v13M2 4.500h5" stroke="#fff" stroke-width="1"/><circle cx="11" cy="11" r="4.800" fill="#2cb43c" stroke="#fff" stroke-width=".6"/><path d="M8.500 11l2 2 3-4" fill="none" stroke="#fff" stroke-width="1.600"/></svg>
<svg class="abs" style="left:1243px;top:986px" width="8" height="5" viewBox="0 0 8 5"><path d="M0 0h8l-4 4.500z" fill="#000"/></svg>
<svg class="abs" style="left:1260px;top:975px" width="16" height="16" viewBox="0 0 16 16"><rect x=".5" y=".5" width="15" height="15" fill="#9cbce4" stroke="#1c3c7c"/><rect x="2.500" y="2.500" width="11" height="11" fill="#d4e4f4" stroke="#6c94c8"/></svg>
<div class="abs" style="left:0;top:994px;width:1280px;height:4px;background:linear-gradient(#3c84e8,#245cd8)"></div>
<div class="abs" style="left:0;top:994px;width:93px;height:4px;background:linear-gradient(#6cb46c,#3c943c);border-radius:0 4px 0 0"></div>
<div class="abs" style="left:1169px;top:994px;width:111px;height:4px;background:linear-gradient(#2ca4f0,#1c8ce0)"></div>
</body></html>
